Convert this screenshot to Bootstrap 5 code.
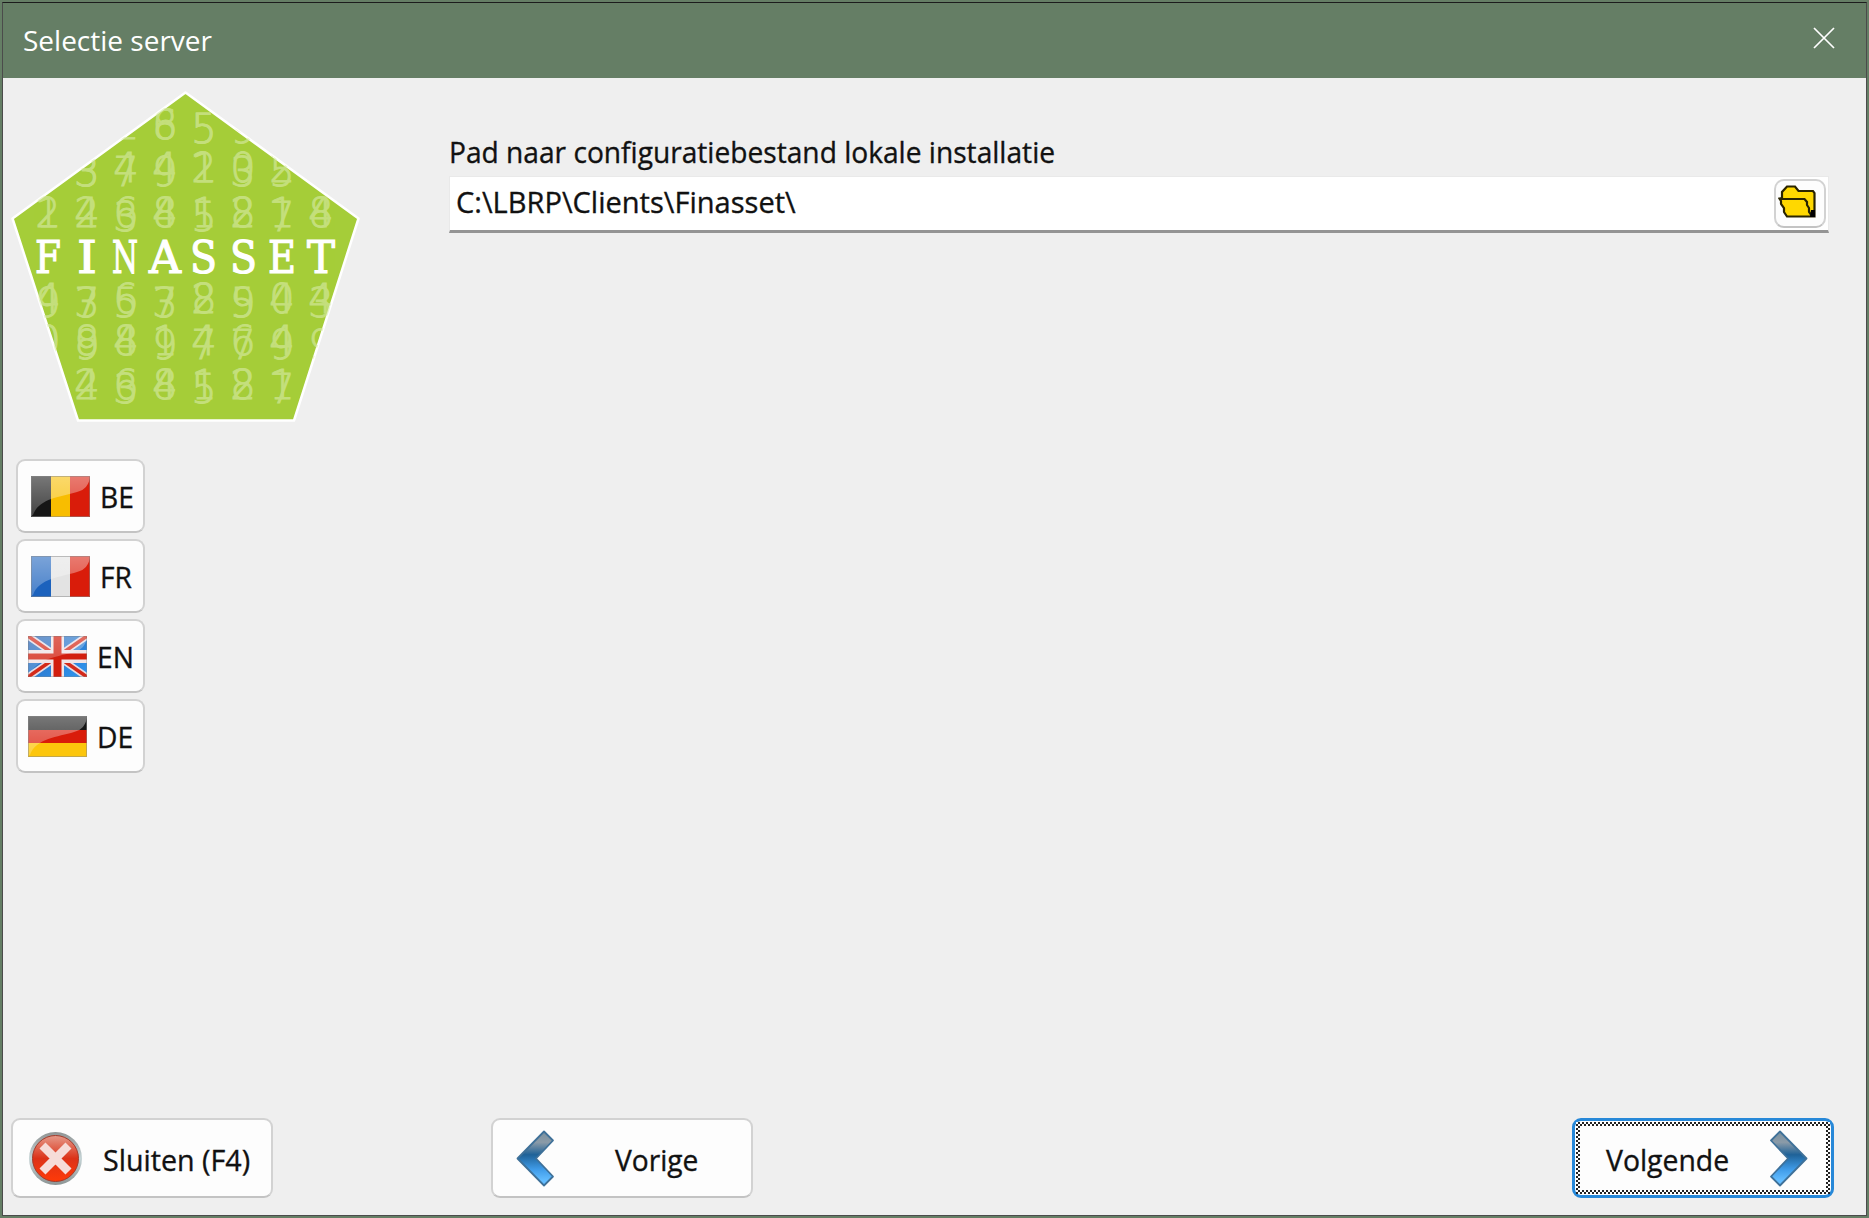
<!DOCTYPE html>
<html lang="nl">
<head>
<meta charset="utf-8">
<title>Selectie server</title>
<link rel="stylesheet" href="https://cdn.jsdelivr.net/npm/bootstrap@5.3.0/dist/css/bootstrap.min.css">
<style>
html,body{height:100%}
body{background:#657e65;font-family:"Open Sans","Noto Sans",sans-serif;font-size:30px;line-height:36px;color:#111;overflow:hidden;padding:2px}
.win{width:1865px;height:1214px;border:1px solid #4b4b4b;border-top-color:#1c1c1c;background:#efefef}
.titlebar{height:75px;background:#657e65;color:#fff;font-size:28px;padding:0 31px 0 20px;flex:none}
.titlebar svg{margin-top:-5px}
.sx{display:inline-block;transform-origin:0 50%;white-space:nowrap;transform:scaleX(.938);-webkit-text-stroke:.35px currentColor}
.titlebar .sx{transform:none;-webkit-text-stroke:0;margin-top:-2px}
.side{width:435px;padding:12px 0 0 8px;flex:none}
.logo{display:block;width:352px;height:334px}
.digits{fill:#d9ebab;stroke:#d9ebab;stroke-width:.9px;opacity:.6;font:200 40px "DejaVu Sans",sans-serif;text-anchor:middle}
.langs{gap:6px;margin:35px 0 0 5px;width:129px}
.wbtn{background:#fdfdfd;border:2px solid #d2d2d2;border-bottom-color:#c3c3c3;border-radius:9px;padding:0;font-size:30px;line-height:36px;color:#111;text-align:left}
.langs .wbtn{height:74px;padding-left:13px;gap:10px}
.langs .sx{margin-top:1px}
.langs .shift{padding-left:10px}
.flag{width:59px;height:41px;flex:none;display:block}
.fields{padding:56px 37px 0 11px}
.pathbox{height:57px;background:#fff;border:1px solid #e9e9e9;border-bottom:3px solid #949494;padding:0 2px 0 6px;margin-top:6px}
.pathbox .sx{margin-top:-4px;transform:scaleX(.968)}
.folder{width:52px;height:49px;border-radius:10px}
.folder svg{margin:0 0 3px 2px}
.foot{height:97px;padding:0 32px 0 8px;flex:none}
.foot .wbtn{width:262px;height:80px}
.foot .sx{margin-top:4px}
.close-btn{padding-left:15px!important}
.close-btn .sx{margin-left:20px;transform:scaleX(.955)}
.prev{margin-left:218px;padding-left:23px!important}
.prev .sx{margin-left:60px}
.foot .next{border:3px solid #2788d8;padding:1px;margin-left:auto}
.next .sx{margin-left:26px;transform:scaleX(.945)}
.next svg{margin-right:18px}
.focus-dots{border:4px solid transparent;width:100%;height:100%;background:linear-gradient(#fdfdfd,#fdfdfd) padding-box,repeating-conic-gradient(#222 0 25%,#fff 0 50%) 0 0/4px 4px border-box}
</style>
</head>
<body>
<div class="win d-flex flex-column">
  <header class="titlebar d-flex align-items-center justify-content-between">
    <span class="sx">Selectie server</span>
    <svg width="22" height="22" viewBox="0 0 22 22" role="img" aria-label="Sluiten"><path d="M1 1 21 21M21 1 1 21" stroke="#fff" stroke-width="1.7"/></svg>
  </header>
  <main class="d-flex flex-grow-1">
    <aside class="side">
      <svg class="logo" viewBox="11 90 352 334" role="img" aria-label="Finasset">
        <defs><clipPath id="pent"><path d="M185.500 92.500 358.500 218.500 294 420.500H78L12.500 218.500Z"/></clipPath></defs>
        <path d="M185.500 92.500 358.500 218.500 294 420.500H78L12.500 218.500Z" fill="#a5cd39" stroke="#fff" stroke-width="2.500" stroke-linejoin="round"/>
        <g clip-path="url(#pent)"><g class="digits" id="digits"></g></g>
        <g fill="#fff" stroke="#fff" stroke-width="1.200" font-family="DejaVu Serif,serif" font-size="45" id="name"></g>
      </svg>
      <div class="langs d-flex flex-column">
        <button class="wbtn d-flex align-items-center"><svg class="flag" viewBox="0 0 59 41"><path fill="#161616" d="M0 0h20v41H0z"/><path fill="#f8bd00" d="M20 0h19v41H20z"/><path fill="#d91c0a" d="M39 0h20v41H39z"/><use href="#gloss"/></svg><span class="sx">BE</span></button>
        <button class="wbtn d-flex align-items-center"><svg class="flag" viewBox="0 0 59 41"><path fill="#1c62bd" d="M0 0h20v41H0z"/><path fill="#e3e3e3" d="M20 0h19v41H20z"/><path fill="#d91c0a" d="M39 0h20v41H39z"/><use href="#gloss"/></svg><span class="sx">FR</span></button>
        <button class="wbtn shift d-flex align-items-center"><svg class="flag" viewBox="0 0 59 41"><path fill="url(#uk)" d="M0 0h59v41H0z"/><path d="M0 0 59 41M59 0 0 41" stroke="#e6dce4" stroke-width="7"/><path d="M0 0 59 41M59 0 0 41" stroke="#d42a1a" stroke-width="3.500"/><path d="M29.500 0v41M0 20.500h59" stroke="#f0e4e6" stroke-width="13"/><path d="M29.500 0v41" stroke="#d21e0e" stroke-width="8"/><path d="M0 20.500h59" stroke="#d21e0e" stroke-width="6"/><use href="#gloss" opacity=".75"/></svg><span class="sx">EN</span></button>
        <button class="wbtn shift d-flex align-items-center"><svg class="flag" viewBox="0 0 59 41"><path fill="#161616" d="M0 0h59v14H0z"/><path fill="#d91c0a" d="M0 14h59v13H0z"/><path fill="#fcc60c" d="M0 27h59v14H0z"/><use href="#gloss"/></svg><span class="sx">DE</span></button>
      </div>
    </aside>
    <section class="fields flex-grow-1">
      <label class="d-block"><span class="sx">Pad naar configuratiebestand lokale installatie</span></label>
      <div class="pathbox d-flex align-items-center justify-content-between">
        <span class="sx">C:\LBRP\Clients\Finasset\</span>
        <button class="wbtn folder" aria-label="Bladeren"><svg class="d-block" width="38" height="34" viewBox="0 0 38 34"><path d="M4 13V7L9 1.500H17L20.500 6H35L36.500 8V31.500H9L6 27V23L3 19V16L1.500 13.500Z" fill="#ffd800" stroke="#2a2400" stroke-width="2.200"/><path d="M2 14H26.500L29 17V20L31 23V27L34 31" fill="none" stroke="#2a2400" stroke-width="2.200"/><path d="M33 25h4v7h-5z"/></svg></button>
      </div>
    </section>
  </main>
  <footer class="foot d-flex align-items-start">
    <button class="wbtn close-btn d-flex align-items-center">
      <svg width="55" height="55" viewBox="0 0 55 55"><circle cx="27.500" cy="27.500" r="26.500" fill="url(#ring)"/><circle cx="27.500" cy="27.500" r="23" fill="url(#red)" stroke="#a33a2a" stroke-width="1"/><path d="M17.500 17.500 37.500 37.500M37.500 17.500 17.500 37.500" stroke="#f6dcd8" stroke-width="8.500" stroke-linecap="square"/></svg>
      <span class="sx">Sluiten (F4)</span>
    </button>
    <button class="wbtn prev d-flex align-items-center">
      <svg width="39" height="57" viewBox="0 0 39 57"><path d="M28 1.500 37 10.500 20 28.500 37 46.500 28 55.500 1.500 28.500Z" fill="url(#blue)" stroke="#3f7199" stroke-width="1.800" stroke-linejoin="round"/></svg>
      <span class="sx">Vorige</span>
    </button>
    <button class="wbtn next"><span class="focus-dots d-flex align-items-center">
      <span class="sx">Volgende</span>
      <svg class="ms-auto" width="39" height="57" viewBox="0 0 39 57"><path d="M11 1.500 2 10.500 19 28.500 2 46.500 11 55.500 37.500 28.500Z" fill="url(#blue)" stroke="#3f7199" stroke-width="1.800" stroke-linejoin="round"/></svg></span>
    </button>
  </footer>
</div>
<svg width="0" height="0" class="position-absolute">
  <defs>
    <linearGradient id="gl" x1="0" y1="0" x2="0" y2="1"><stop offset="0" stop-color="#fff" stop-opacity=".42"/><stop offset="1" stop-color="#fff" stop-opacity=".2"/></linearGradient>
    <linearGradient id="uk" x1="0" y1="0" x2="1" y2="1"><stop offset="0" stop-color="#2a62b0"/><stop offset="1" stop-color="#2f97f2"/></linearGradient>
    <linearGradient id="ring" x1="0" y1="0" x2="0" y2="1"><stop offset="0" stop-color="#8f9494"/><stop offset=".5" stop-color="#c6d4d6"/><stop offset="1" stop-color="#8b9494"/></linearGradient>
    <linearGradient id="red" x1="0" y1="0" x2="0" y2="1"><stop offset="0" stop-color="#e59a8a"/><stop offset=".5" stop-color="#dc3218"/><stop offset="1" stop-color="#ff3a08"/></linearGradient>
    <linearGradient id="blue" x1="0" y1="0" x2="0" y2="1"><stop offset="0" stop-color="#79909f"/><stop offset=".2" stop-color="#8b9ba8"/><stop offset=".43" stop-color="#1f6298"/><stop offset=".7" stop-color="#3f9be8"/><stop offset=".9" stop-color="#62bcff"/></linearGradient>
    <g id="gloss"><path fill="url(#gl)" d="M0 0h59Q58 13 46 16C30 21 8 22 2 39L0 40Z"/><path d="M.5.5h58v40H.5z" fill="none" stroke="#888" stroke-opacity=".5"/></g>
  </defs>
</svg>
<script>
const ns='http://www.w3.org/2000/svg';
// Each row: baseline, then two layers of digits printed over each other
const rows=[[139,'  2859','   65 '],[182,' 379235',' 344102'],[227,'22385278','14641814'],[313,'47578503','93632944'],[355,'09817799','0849464 '],[399,' 238527',' 464181']];
const put=(g,x,y,s,w)=>{const t=document.createElementNS(ns,'text');t.setAttribute('x',x);t.setAttribute('y',y);if(w){t.setAttribute('textLength',w);t.setAttribute('lengthAdjust','spacingAndGlyphs')}t.textContent=s;g.append(t)};
const g=document.getElementById('digits'),n=document.getElementById('name');
rows.forEach(([y,a,b])=>[a,b].forEach((s,k)=>[...s].forEach((c,i)=>c!==' '&&put(g,48+i*39,y+('3579'.includes(c)?4:0),c))));
[...'FINASSET'].forEach((c,i)=>put(n,[35,77,112,149,190,230,268,307][i],272.5,c,[26,20,26,32,27,27,28,28][i]));
</script>
<script src="https://cdn.jsdelivr.net/npm/bootstrap@5.3.0/dist/js/bootstrap.bundle.min.js"></script>
</body>
</html>
